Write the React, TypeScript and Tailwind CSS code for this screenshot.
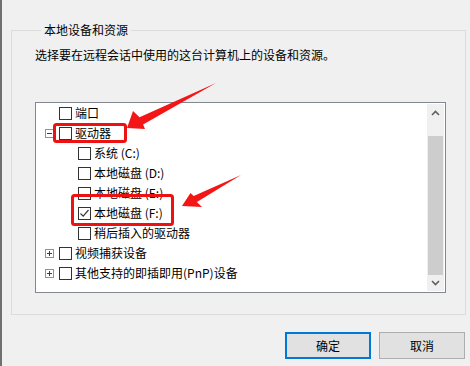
import React from "react";

const font = { fontFamily: '"Noto Sans CJK SC", "Noto Sans", sans-serif' };

function Checkbox({ checked }: { checked?: boolean }) {
  return (
    <div className="w-[13px] h-[13px] border border-[#333333] bg-white flex items-center justify-center shrink-0">
      {checked && (
        <svg width="11" height="11" viewBox="0 0 11 11">
          <path d="M1.5 5.5 L4.2 8.2 L9.5 2" fill="none" stroke="#3a3a3a" strokeWidth="1.2" />
        </svg>
      )}
    </div>
  );
}

function Expander({ kind }: { kind?: "plus" | "minus" }) {
  if (!kind) return <div className="w-[9px] h-[9px] shrink-0" />;
  return (
    <svg width="9" height="9" viewBox="0 0 9 9" className="shrink-0">
      <rect x="0.5" y="0.5" width="8" height="8" fill="#ffffff" stroke="#919191" />
      <line x1="2" y1="4.5" x2="7" y2="4.5" stroke="#3c3c3c" />
      {kind === "plus" && <line x1="4.5" y1="2" x2="4.5" y2="7" stroke="#3c3c3c" />}
    </svg>
  );
}

type Row = { label: string; level: 1 | 2; exp?: "plus" | "minus"; checked?: boolean };

const rows: Row[] = [
  { label: "端口", level: 1 },
  { label: "驱动器", level: 1, exp: "minus" },
  { label: "系统 (C:)", level: 2 },
  { label: "本地磁盘 (D:)", level: 2 },
  { label: "本地磁盘 (E:)", level: 2 },
  { label: "本地磁盘 (F:)", level: 2, checked: true },
  { label: "稍后插入的驱动器", level: 2 },
  { label: "视频捕获设备", level: 1, exp: "plus" },
  { label: "其他支持的即插即用(PnP)设备", level: 1, exp: "plus" },
];

export default function App() {
  return (
    <div
      className="relative w-[470px] h-[366px] bg-[#f0f0f0] text-black text-[12px] leading-[16px] border-l-2 border-[#707070] overflow-hidden"
      style={font}
    >
      <div className="pl-[9px] pt-[22px]">
        <fieldset className="w-[455px] border border-[#dcdcdc] pl-[23px] pr-[19px] pb-[21px] m-0">
          <legend className="ml-[6px] px-[3px] leading-[16px]">本地设备和资源</legend>
          <div className="mt-[9px] leading-[16px]">选择要在远程会话中使用的这台计算机上的设备和资源。</div>
          <div className="mt-[39px] w-[411px] h-[191px] border border-[#828790] bg-white flex">
            <div className="flex-1 flex flex-col">
              {rows.map((r, i) => (
                <div
                  key={i}
                  className={`h-[20px] flex items-center ${r.level === 1 ? "pl-[9px]" : "pl-[28px]"}`}
                >
                  <Expander kind={r.exp} />
                  <div className="w-[5px] shrink-0" />
                  <Checkbox checked={r.checked} />
                  <span className="ml-[3px] whitespace-nowrap">{r.label}</span>
                </div>
              ))}
            </div>
            <div className="w-[17px] my-[1px] mr-[1px] bg-[#f0f0f0] flex flex-col">
              <div className="h-[32px] flex items-start justify-center pt-[6px]">
                <svg width="9" height="6" viewBox="0 0 9 6">
                  <path d="M1 5 L4.5 1.5 L8 5" fill="none" stroke="#606060" strokeWidth="1.6" />
                </svg>
              </div>
              <div className="flex-1 mx-[1px] bg-[#cdcdcd]" />
              <div className="h-[16px] flex items-center justify-center">
                <svg width="9" height="6" viewBox="0 0 9 6">
                  <path d="M1 1 L4.5 4.5 L8 1" fill="none" stroke="#606060" strokeWidth="1.6" />
                </svg>
              </div>
            </div>
          </div>
        </fieldset>
      </div>
      <div className="mt-[17px] flex justify-end gap-[8px] pr-[5px]">
        <button className="w-[86px] h-[27px] border-2 border-[#0078d7] bg-[#e1e1e1] text-[12px]" style={font}>
          确定
        </button>
        <button className="w-[86px] h-[27px] border border-[#adadad] bg-[#e1e1e1] text-[12px]" style={font}>
          取消
        </button>
      </div>
      <svg className="absolute left-[-2px] top-0 pointer-events-none" width="470" height="366" viewBox="0 0 470 366">
        <rect x="54.5" y="124.5" width="71" height="17" rx="2" fill="none" stroke="#ee1111" strokeWidth="3" />
        <rect x="72.5" y="195.5" width="100" height="29" rx="2" fill="none" stroke="#ee1111" strokeWidth="3" />
        <polygon points="127,128 133,111 139.5,117.2 216,83 143.1,124.4 145,129" fill="#f41616" />
        <polygon points="182,206 190.5,193 193.7,195.9 241,175 196.9,202.1 202,207" fill="#f41616" />
      </svg>
    </div>
  );
}
